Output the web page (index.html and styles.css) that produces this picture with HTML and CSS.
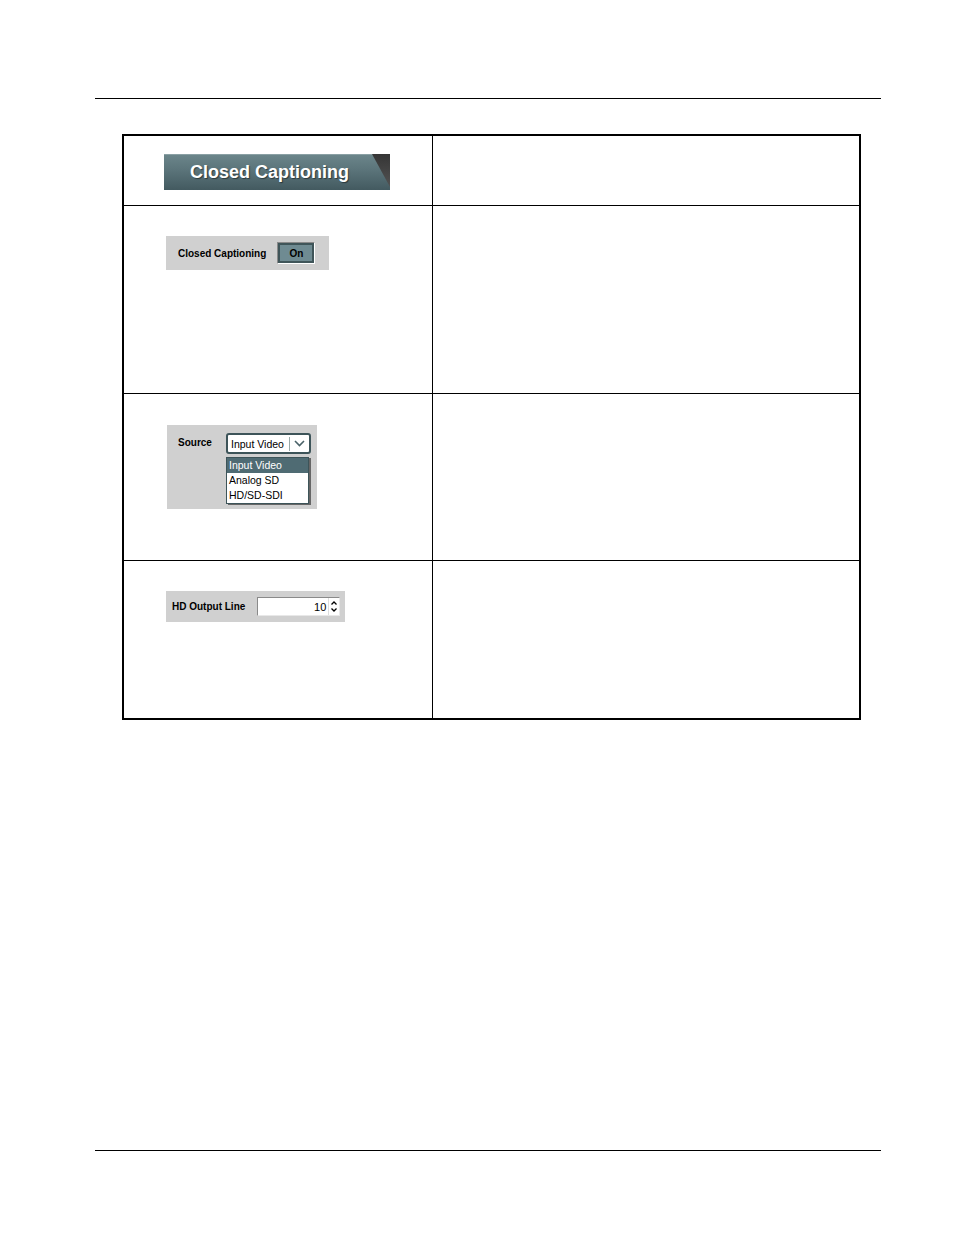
FILE: index.html
```html
<!DOCTYPE html>
<html>
<head>
<meta charset="utf-8">
<link rel="stylesheet" href="styles.css">
</head>
<body>
<div class="page">
  <div class="top-rule"></div>
  <div class="tbl">
    <div class="cell left r1">
      <div class="banner">
        <div class="banner-shape"><span class="banner-text">Closed Captioning</span></div>
      </div>
    </div>
    <div class="cell right r1"></div>

    <div class="cell left r2">
      <div class="panel p-cc">
        <span class="lbl">Closed Captioning</span>
        <span class="btn-on"><span class="btn-in">On</span></span>
      </div>
    </div>
    <div class="cell right r2"></div>

    <div class="cell left r3">
      <div class="panel p-src">
        <span class="lbl src-lbl">Source</span>
        <div class="sel-wrap">
          <div class="select">
            <span class="sel-text">Input Video</span>
            <span class="sel-div"></span>
            <svg class="chev" width="11" height="7" viewBox="0 0 11 7"><polyline points="1,1 5.5,5.5 10,1" fill="none" stroke="#4a6268" stroke-width="1.6"/></svg>
          </div>
          <div class="list">
            <div class="item sel">Input Video</div>
            <div class="item">Analog SD</div>
            <div class="item">HD/SD-SDI</div>
          </div>
        </div>
      </div>
    </div>
    <div class="cell right r3"></div>

    <div class="cell left r4">
      <div class="panel p-hd">
        <span class="lbl">HD Output Line</span>
        <div class="num">
          <span class="num-val">10</span>
          <span class="spin">
            <svg width="6" height="4" viewBox="0 0 6 4"><polyline points="0.5,3.5 3,1 5.5,3.5" fill="none" stroke="#000" stroke-width="1.3"/></svg>
            <svg width="6" height="4" viewBox="0 0 6 4"><polyline points="0.5,0.5 3,3 5.5,0.5" fill="none" stroke="#000" stroke-width="1.3"/></svg>
          </span>
        </div>
      </div>
    </div>
    <div class="cell right r4"></div>
  </div>
  <div class="bottom-rule"></div>
</div>
</body>
</html>
```

FILE: styles.css
```css
html, body {
  margin: 0;
  padding: 0;
  background: #ffffff;
}
.page {
  width: 954px;
  height: 1235px;
  font-family: "Liberation Sans", Arial, sans-serif;
}
.top-rule {
  height: 98px;
  margin-left: 95px;
  width: 786px;
  border-bottom: 1px solid #000;
}
.tbl {
  margin-top: 35px;
  margin-left: 122px;
  width: 735px;
  border: 2px solid #000;
  display: grid;
  grid-template-columns: 309px 1fr;
  grid-template-rows: 70px 188px 167px 157px;
}
.cell {
  box-sizing: border-box;
}
.left {
  border-right: 1px solid #000;
}
.r1, .r2, .r3 {
  border-bottom: 1px solid #000;
}
.r1.left { padding: 18px 0 0 40px; }
.r2.left { padding: 30px 0 0 42px; }
.r3.left { padding: 31px 0 0 43px; }
.r4.left { padding: 30px 0 0 42px; }

/* banner */
.banner {
  width: 226px;
  height: 36px;
  background: linear-gradient(to bottom, #353535, #555555);
  position: relative;
}
.banner-shape {
  height: 36px;
  width: 226px;
  background: linear-gradient(to bottom, #6b858a 0%, #5a7379 45%, #435a60 100%);
  clip-path: polygon(0 0, 208px 0, 226px 33px, 226px 36px, 0 36px);
  display: flex;
  align-items: center;
  box-sizing: border-box;
  padding-left: 26px;
  border-top: 1px solid #8aa0a4;
}
.banner-text {
  color: #ffffff;
  font-weight: bold;
  font-size: 18px;
  text-shadow: 1px 1px 1px rgba(0,0,0,0.45);
}

/* panels */
.panel {
  background: #d0d0d0;
  box-sizing: border-box;
  display: flex;
}
.lbl {
  font-size: 10px;
  font-weight: bold;
  color: #000;
}
.p-cc {
  width: 163px;
  height: 34px;
  align-items: center;
  padding-left: 12px;
}
.btn-on {
  margin-left: 11px;
  width: 38px;
  height: 22px;
  box-sizing: border-box;
  border-top: 1px solid #8a8a8a;
  border-left: 1px solid #8a8a8a;
  border-right: 1px solid #ffffff;
  border-bottom: 1px solid #ffffff;
  display: flex;
}
.btn-in {
  flex: 1;
  border: 2px solid #3f5559;
  background: #6f8b92;
  display: flex;
  align-items: center;
  justify-content: center;
  font-size: 10px;
  font-weight: bold;
  color: #000;
}

.p-src {
  width: 150px;
  height: 84px;
  padding: 8px 0 0 11px;
  align-items: flex-start;
}
.src-lbl {
  margin-top: 4px;
  width: 48px;
}
.sel-wrap {
  display: flex;
  flex-direction: column;
}
.select {
  width: 85px;
  height: 21px;
  box-sizing: border-box;
  border: 2px solid #3d5459;
  border-radius: 3px;
  background: #fff;
  display: flex;
  align-items: center;
}
.sel-text {
  font-size: 10.5px;
  padding-left: 3px;
  width: 58px;
  color: #000;
}
.sel-div {
  width: 1px;
  height: 14px;
  background: #9aa;
  margin-right: 4px;
}
.chev {
  display: block;
}
.list {
  margin-top: 3px;
  width: 83px;
  box-sizing: border-box;
  border: 1px solid #3d5459;
  background: #fff;
  box-shadow: 2px 1px 0 #666;
}
.item {
  font-size: 10.5px;
  height: 15px;
  line-height: 15px;
  padding-left: 2px;
  color: #000;
}
.item.sel {
  background: #4f6b73;
  color: #fff;
}

.p-hd {
  width: 179px;
  height: 31px;
  padding-left: 6px;
  align-items: center;
}
.num {
  margin-left: 12px;
  width: 83px;
  height: 19px;
  box-sizing: border-box;
  border-top: 1px solid #8a8a8a;
  border-left: 1px solid #8a8a8a;
  border-right: 1px solid #e8e8e8;
  border-bottom: 1px solid #e8e8e8;
  background: #fff;
  display: flex;
  align-items: center;
}
.num-val {
  flex: 1;
  text-align: right;
  font-size: 11px;
  padding-right: 2px;
}
.spin {
  width: 10px;
  height: 17px;
  display: flex;
  flex-direction: column;
  align-items: center;
  justify-content: center;
  gap: 3px;
  border-left: 1px solid #ddd;
}
.spin svg {
  display: block;
}

.bottom-rule {
  margin-top: 430px;
  margin-left: 95px;
  width: 786px;
  border-top: 1px solid #000;
}
```
